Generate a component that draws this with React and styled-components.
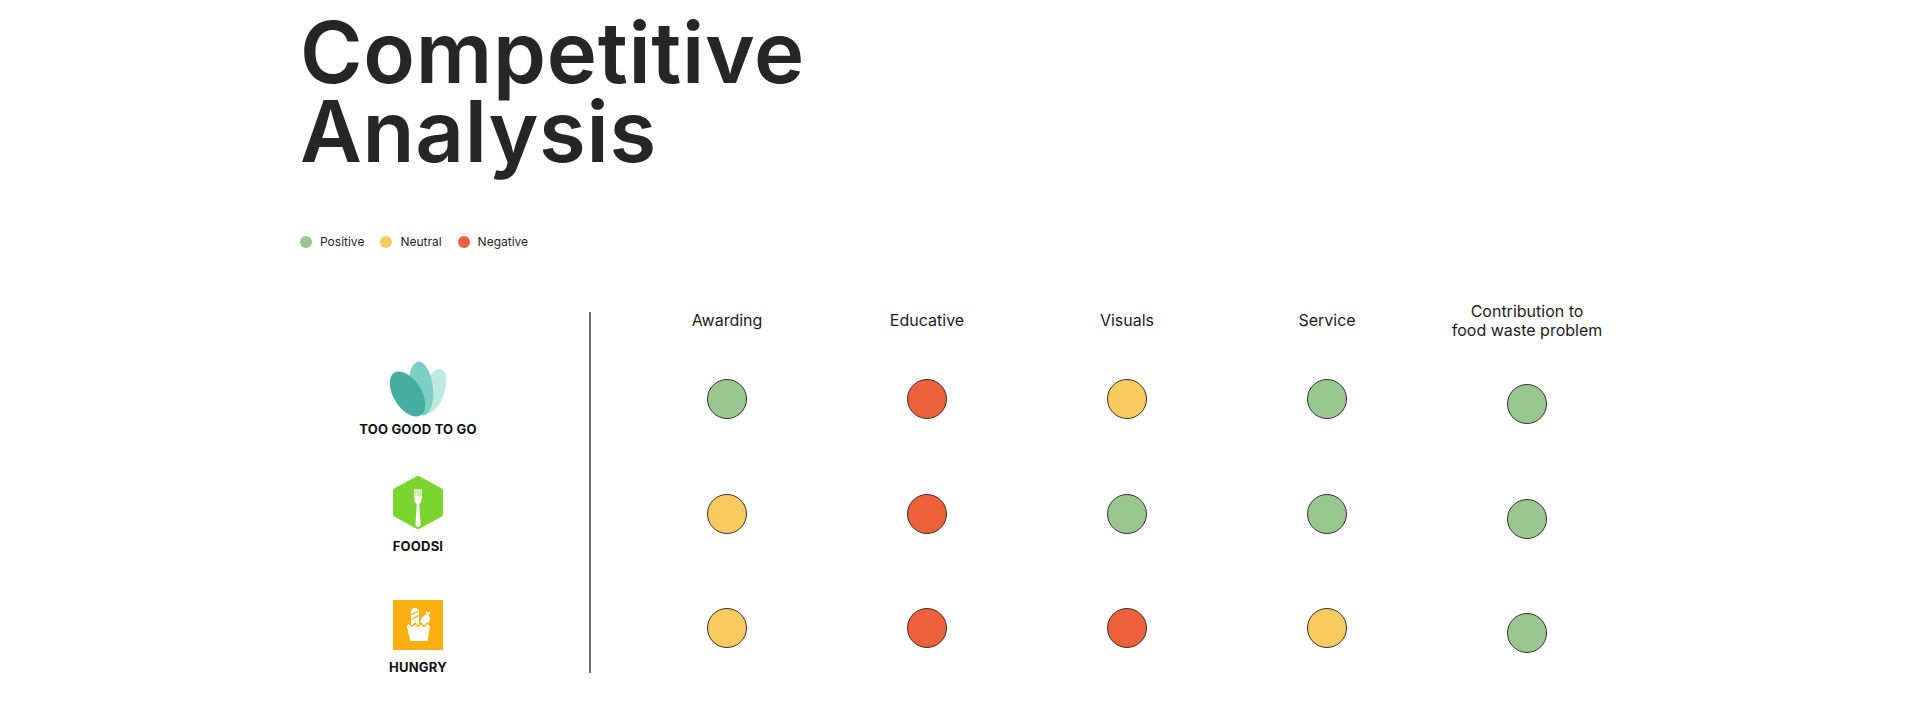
import React from 'react';
import styled, { createGlobalStyle } from 'styled-components';

const GlobalStyle = createGlobalStyle`
  body {
    margin: 0;
    background: #ffffff;
    font-family: Inter, "Noto Sans", sans-serif;
  }
`;

const COLORS = {
    positive: "#99c58f",
    neutral: "#f8cb61",
    negative: "#ee613a",
};

const Page = styled.div({
    width: "1920px",
    height: "712px",
    padding: "13px 0 0 300px",
    boxSizing: "border-box",
    overflow: "hidden",
});

const Title = styled.h1({
    margin: 0,
    fontSize: "85px",
    lineHeight: "79px",
    fontWeight: 600,
    letterSpacing: "0.7px",
    color: "#262626",
});

const Legend = styled.div({
    display: "flex",
    alignItems: "center",
    gap: "16px",
    marginTop: "64px",
    height: "14px",
});

const LegendItem = styled.div({
    display: "flex",
    alignItems: "center",
    gap: "8px",
    fontSize: "12px",
    lineHeight: "14px",
    color: "#1f1f1f",
});

const Dot = styled.span(({ $tone }) => ({
    width: "12px",
    height: "12px",
    borderRadius: "50%",
    background: COLORS[$tone],
}));

const Table = styled.div({
    display: "flex",
    marginTop: "63px",
});

const LogoColumn = styled.div({
    width: "236px",
    display: "grid",
    gridTemplateRows: "30px repeat(3, 114.5px)",
});

const LogoBlock = styled.div(({ $gap, $shift }) => ({
    display: "flex",
    flexDirection: "column",
    alignItems: "center",
    justifyContent: "center",
    gap: $gap,
    marginTop: $shift || 0,
}));

const LogoLabel = styled.span({
    fontSize: "13px",
    lineHeight: "15px",
    fontWeight: 700,
    color: "#111111",
    letterSpacing: "0.2px",
});

const Divider = styled.div({
    width: "2px",
    height: "361px",
    marginLeft: "53px",
    background: "#6f6f6f",
});

const Matrix = styled.div({
    marginLeft: "36px",
    display: "grid",
    gridTemplateColumns: "repeat(5, 200px)",
    gridTemplateRows: "30px repeat(3, 114.5px)",
});

const HeaderCell = styled.div({
    display: "flex",
    alignItems: "center",
    justifyContent: "center",
    textAlign: "center",
    fontSize: "16px",
    lineHeight: "19px",
    color: "#1c1c1c",
    marginBottom: "13px",
});

const Cell = styled.div({
    display: "flex",
    alignItems: "center",
    justifyContent: "center",
});

const Rating = styled.span(({ $tone, $low }) => ({
    width: "40px",
    height: "40px",
    boxSizing: "border-box",
    borderRadius: "50%",
    border: "1.5px solid #333333",
    background: COLORS[$tone],
    marginTop: $low ? "10px" : 0,
}));

const TooGoodLogo = () => (
    <svg width="60" height="58" viewBox="0 0 60 58">
        <ellipse cx="46" cy="30" rx="10.5" ry="23" transform="rotate(18 46 30)" fill="#bfeae4" />
        <ellipse cx="33" cy="27.5" rx="12" ry="27" transform="rotate(-6 33 27.5)" fill="#7acfc6" />
        <ellipse cx="19.5" cy="33" rx="14" ry="25" transform="rotate(-32 19.5 33)" fill="#45ada1" />
    </svg>
);

const FoodsiLogo = () => (
    <svg width="50" height="53" viewBox="0 0 50 53">
        <polygon
            points="25,3 47,14.8 47,38.2 25,50 3,38.2 3,14.8"
            fill="#7cd42f"
            stroke="#7cd42f"
            strokeWidth="6"
            strokeLinejoin="round"
        />
        <g fill="#ffffff">
            <rect x="21.3" y="13" width="1.3" height="8" rx="0.6" />
            <rect x="23.3" y="13" width="1.3" height="8" rx="0.6" />
            <rect x="25.4" y="13" width="1.3" height="8" rx="0.6" />
            <rect x="27.4" y="13" width="1.3" height="8" rx="0.6" />
            <path d="M21.3 20 H28.7 V21.5 Q28.7 26.5 26.2 28.2 L27.6 49 Q25 53 22.4 49 L23.8 28.2 Q21.3 26.5 21.3 21.5 Z" />
        </g>
    </svg>
);

const HungryLogo = () => (
    <svg width="50" height="50" viewBox="0 0 50 50">
        <rect width="50" height="50" fill="#fbb012" />
        <rect x="18" y="8" width="8" height="22" rx="4" fill="#ffffff" />
        <path d="M19 14.5 L24.5 11.5 M19 19 L25 15.8" stroke="#fbb012" strokeWidth="1.4" strokeLinecap="round" />
        <ellipse cx="32" cy="21" rx="4.2" ry="6.8" transform="rotate(25 32 21)" fill="#ffffff" />
        <path d="M33.5 14 L32.5 10.5 L35 13 L37.5 11 L36.2 15 Z" fill="#ffffff" />
        <path
            d="M13 26 L16 23 L19 26.5 L22 23 L25 26.5 L28 23 L31 26.5 L34 23 L37.5 26 L35 41.5 L17 41.5 Z"
            fill="#ffffff"
            stroke="#fbb012"
            strokeWidth="1.2"
            strokeLinejoin="round"
        />
    </svg>
);

const criteria = ["Awarding", "Educative", "Visuals", "Service", "Contribution to\nfood waste problem"];

const competitors = [
    { id: 1, name: "TOO GOOD TO GO", Logo: TooGoodLogo, gap: "3px", shift: 0, ratings: ["positive", "negative", "neutral", "positive", "positive"] },
    { id: 2, name: "FOODSI", Logo: FoodsiLogo, gap: "10px", shift: "2px", ratings: ["neutral", "negative", "positive", "positive", "positive"] },
    { id: 3, name: "HUNGRY", Logo: HungryLogo, gap: "10px", shift: "18px", ratings: ["neutral", "negative", "negative", "neutral", "positive"] },
];

const legend = [
    { tone: "positive", label: "Positive" },
    { tone: "neutral", label: "Neutral" },
    { tone: "negative", label: "Negative" },
];

export default function App() {
    return (
        <Page>
            <GlobalStyle />
            <Title>Competitive<br />Analysis</Title>

            <Legend>
                {legend.map((item) => (
                    <LegendItem key={item.tone}>
                        <Dot $tone={item.tone} />
                        {item.label}
                    </LegendItem>
                ))}
            </Legend>

            <Table>
                <LogoColumn>
                    <div />
                    {competitors.map(({ id, name, Logo, gap, shift }) => (
                        <LogoBlock key={id} $gap={gap} $shift={shift}>
                            <Logo />
                            <LogoLabel>{name}</LogoLabel>
                        </LogoBlock>
                    ))}
                </LogoColumn>

                <Divider />

                <Matrix>
                    {criteria.map((c) => (
                        <HeaderCell key={c}>
                            <span>
                                {c.split("\n").map((line, i) => (
                                    <React.Fragment key={i}>
                                        {i > 0 && <br />}
                                        {line}
                                    </React.Fragment>
                                ))}
                            </span>
                        </HeaderCell>
                    ))}
                    {competitors.map((row) =>
                        row.ratings.map((tone, i) => (
                            <Cell key={`${row.id}-${i}`}>
                                <Rating $tone={tone} $low={i === 4} />
                            </Cell>
                        ))
                    )}
                </Matrix>
            </Table>
        </Page>
    );
}
